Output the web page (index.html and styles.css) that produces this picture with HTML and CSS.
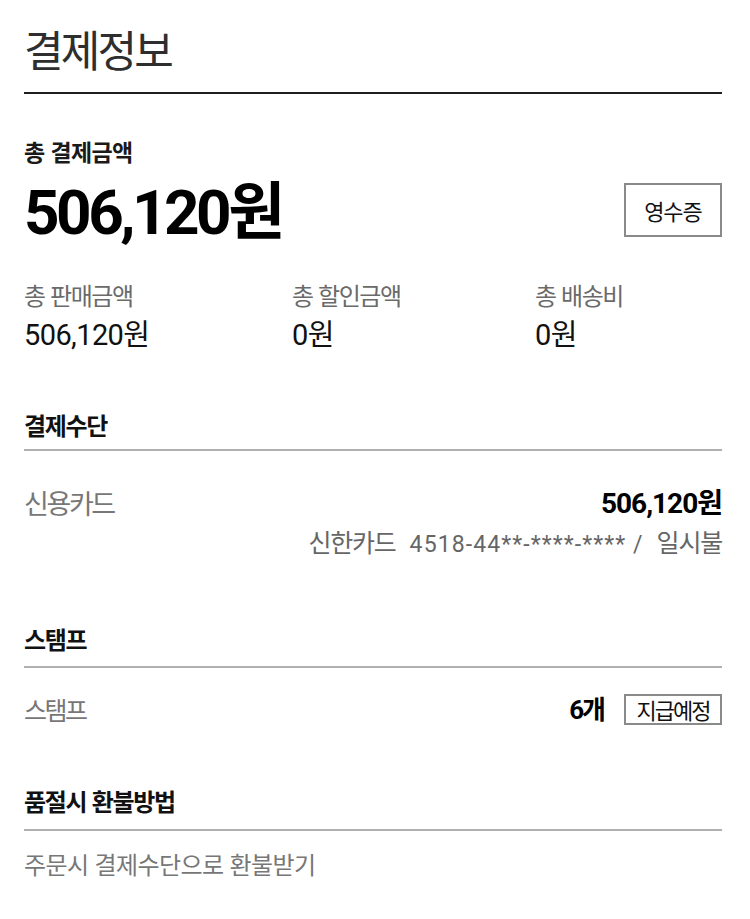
FILE: index.html
```html
<!DOCTYPE html>
<html lang="ko">
<head>
<meta charset="utf-8">
<link rel="stylesheet" href="styles.css">
</head>
<body>
<div class="page">
  <header class="page-head">
    <h1 class="page-title">결제정보</h1>
  </header>

  <section class="total">
    <div class="total-label">총 결제금액</div>
    <div class="total-row">
      <div class="total-amount">506,120<span class="won">원</span></div>
      <button class="btn-box btn-receipt">영수증</button>
    </div>
  </section>

  <section class="summary">
    <div class="sum-col">
      <div class="sum-label">총 판매금액</div>
      <div class="sum-value">506,120<span class="won">원</span></div>
    </div>
    <div class="sum-col">
      <div class="sum-label">총 할인금액</div>
      <div class="sum-value">0<span class="won">원</span></div>
    </div>
    <div class="sum-col">
      <div class="sum-label">총 배송비</div>
      <div class="sum-value">0<span class="won">원</span></div>
    </div>
  </section>

  <section class="block block-pay">
    <h2 class="block-title">결제수단</h2>
    <div class="row">
      <span class="row-label">신용카드</span>
      <span class="row-amount">506,120<span class="won">원</span></span>
    </div>
    <div class="card-detail"><span class="kr">신한카드</span><span class="num">4518-44**-****-**** /</span><span class="kr">일시불</span></div>
  </section>

  <section class="block block-stamp">
    <h2 class="block-title">스탬프</h2>
    <div class="row row-stamp">
      <span class="row-label row-label-sm">스탬프</span>
      <span class="stamp-right">
        <span class="stamp-count">6<span class="won">개</span></span>
        <span class="btn-box btn-tag">지급예정</span>
      </span>
    </div>
  </section>

  <section class="block block-refund">
    <h2 class="block-title">품절시 환불방법</h2>
    <div class="refund-text">주문시 결제수단으로 환불받기</div>
  </section>
</div>
</body>
</html>
```

FILE: styles.css
```css
* { box-sizing: border-box; }
html, body { margin: 0; padding: 0; background: #fff; }
body {
  font-family: Roboto, "Noto Sans CJK KR", sans-serif;
  color: #111;
}
.page {
  width: 698px;
  margin-left: 24px;
}
.page-head {
  padding-top: 26px;
  padding-bottom: 22px;
  border-bottom: 2px solid #1e1e1e;
}
.page-title {
  margin: 0;
  font-family: "Noto Sans CJK KR", sans-serif;
  font-weight: 400;
  font-size: 43px;
  line-height: 44px;
  letter-spacing: -2.8px;
  color: #2e2e2e;
}
.won, .kr { font-family: "Noto Sans CJK KR", sans-serif; }

.total { padding-top: 44px; }
.total-label {
  font-family: "Noto Sans CJK KR", sans-serif;
  font-weight: 700;
  font-size: 23px;
  line-height: 26px;
  letter-spacing: -0.6px;
  color: #1a1a1a;
}
.total-row {
  display: flex;
  justify-content: space-between;
  align-items: center;
  margin-top: 11px;
}
.total-amount {
  font-weight: 700;
  font-size: 62px;
  line-height: 64px;
  letter-spacing: -3.5px;
  color: #000;
}
.btn-box {
  display: inline-flex;
  align-items: center;
  justify-content: center;
  border: 2px solid #8a8a8a;
  background: #fff;
  font-family: "Noto Sans CJK KR", sans-serif;
  color: #111;
  padding: 0;
}
.btn-receipt {
  width: 98px;
  height: 54px;
  font-size: 22px;
  letter-spacing: -1px;
}

.summary {
  display: grid;
  grid-template-columns: 268px 243px 1fr;
  padding-top: 36px;
}
.sum-label {
  font-family: "Noto Sans CJK KR", sans-serif;
  font-size: 24px;
  line-height: 28px;
  letter-spacing: -1.4px;
  color: #6a6a6a;
}
.sum-value {
  margin-top: 7px;
  font-size: 29px;
  line-height: 32px;
  letter-spacing: -0.6px;
  color: #111;
}

.block-title {
  margin: 0;
  font-family: "Noto Sans CJK KR", sans-serif;
  font-weight: 700;
  font-size: 24px;
  line-height: 28px;
  letter-spacing: -1.3px;
  color: #111;
  padding-bottom: 10px;
  border-bottom: 2px solid #b0b0b0;
}
.block-pay { padding-top: 60px; }
.block-stamp { padding-top: 66px; }
.block-stamp .block-title { padding-bottom: 13px; }
.block-refund { padding-top: 62px; }
.block-refund .block-title { padding-bottom: 14px; }

.row {
  display: flex;
  justify-content: space-between;
  align-items: center;
  margin-top: 34px;
}
.row-label {
  font-family: "Noto Sans CJK KR", sans-serif;
  font-size: 27px;
  line-height: 32px;
  letter-spacing: -2.4px;
  color: #777;
}
.row-label-sm {
  font-size: 25px;
  letter-spacing: -2.5px;
}
.row-amount {
  font-weight: 700;
  font-size: 28px;
  line-height: 32px;
  letter-spacing: -1px;
  color: #000;
}
.card-detail {
  display: flex;
  justify-content: flex-end;
  align-items: baseline;
  margin-top: 7px;
  line-height: 28px;
  color: #666;
}
.card-detail .kr {
  font-size: 25px;
  letter-spacing: -1.2px;
}
.card-detail .num {
  font-size: 23px;
  letter-spacing: 1.1px;
  margin: 0 13px 0 14px;
}

.row-stamp { margin-top: 25px; }
.stamp-right {
  display: flex;
  align-items: center;
  gap: 20px;
}
.stamp-count {
  font-weight: 700;
  font-size: 26px;
  line-height: 30px;
  letter-spacing: -2px;
  color: #000;
}
.btn-tag {
  width: 98px;
  height: 31px;
  font-size: 22px;
  letter-spacing: -2px;
}

.refund-text {
  margin-top: 19px;
  font-family: "Noto Sans CJK KR", sans-serif;
  font-size: 24px;
  line-height: 28px;
  letter-spacing: -0.6px;
  color: #777;
}
```
